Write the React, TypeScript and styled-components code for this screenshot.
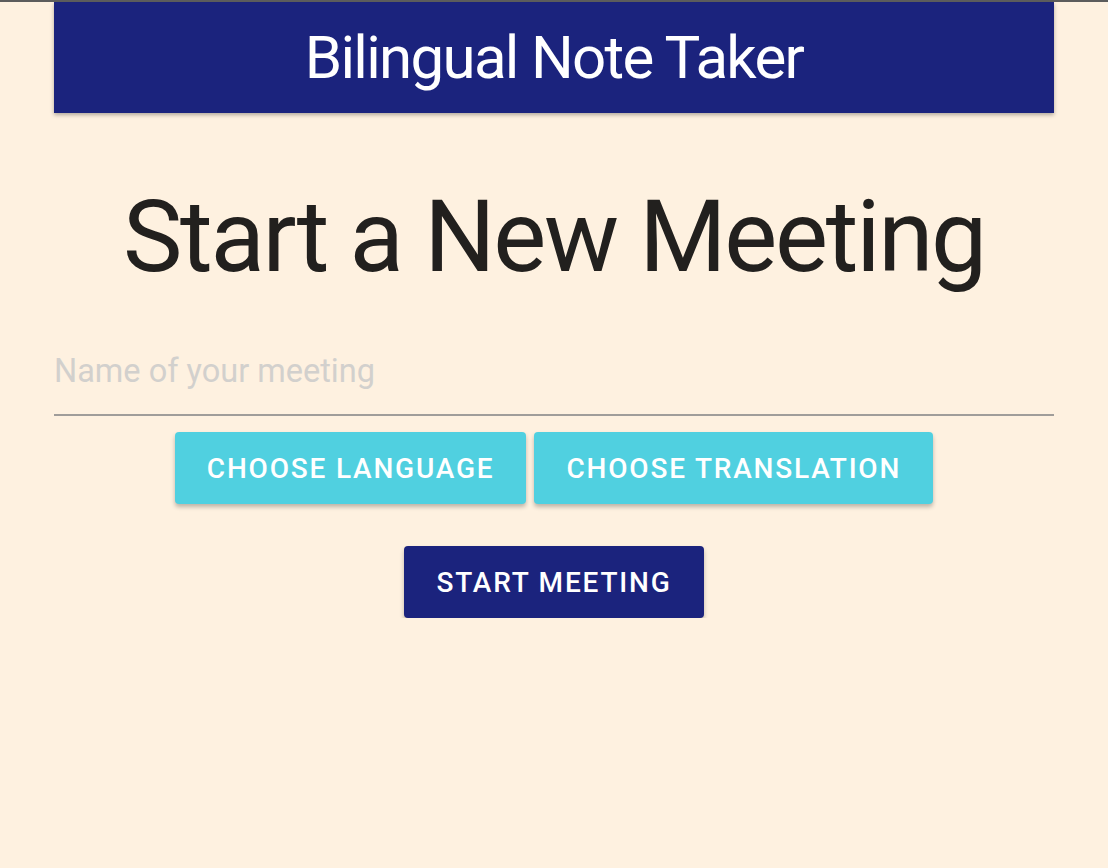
import React, { useState } from 'react';
import styled, { createGlobalStyle } from 'styled-components';

const GlobalStyle = createGlobalStyle`
  html, body {
    margin: 0;
    padding: 0;
    background: #fef1e0;
    font-family: Roboto, "Noto Sans", sans-serif;
  }
  body {
    border-top: 2px solid #5c5c5c;
  }
`

const Page = styled.div`
  width: 1000px;
  margin: 0 auto;
  display: flex;
  flex-direction: column;
  align-items: center;
`
const Header = styled.header`
  width: 100%;
  height: 111px;
  background: #1b237d;
  box-shadow: 0 2px 4px rgba(0, 0, 0, 0.3);
  display: flex;
  align-items: center;
  justify-content: center;
`
const HeaderTitle = styled.h1`
  margin: 0;
  color: #fff;
  font-size: 60px;
  font-weight: 400;
  letter-spacing: -1.7px;
`
const Title = styled.h2`
  margin: 64px 0 0;
  font-size: 100px;
  font-weight: 400;
  line-height: 1.2;
  color: #22201e;
  letter-spacing: -2.3px;
`
const NameInput = styled.input`
  width: 100%;
  box-sizing: border-box;
  margin-top: 55px;
  padding: 0 0 24px;
  border: none;
  border-bottom: 2px solid #a09d9a;
  background: transparent;
  font-family: inherit;
  font-size: 32.5px;
  color: #22201e;
  outline: none;
  &::placeholder {
    color: #d2d0cd;
  }
`
const ButtonRow = styled.div`
  display: flex;
  gap: 8px;
  margin-top: 16px;
`
const Button = styled.button<{ $variant: 'accent' | 'primary' }>`
  height: 72px;
  padding: 0 32px;
  border: none;
  border-radius: 4px;
  background: ${({ $variant }) => ($variant === 'accent' ? '#50d0e0' : '#1b237d')};
  color: #fff;
  font-family: inherit;
  font-size: 28px;
  font-weight: 500;
  letter-spacing: 1.8px;
  text-transform: uppercase;
  box-shadow: 0 3px 4px rgba(0, 0, 0, 0.25);
  cursor: pointer;
`
const StartRow = styled.div`
  margin-top: 42px;
`

export default function App() {
  const [name, setName] = useState('')

  return (
    <>
      <GlobalStyle />
      <Page>
        <Header>
          <HeaderTitle>Bilingual Note Taker</HeaderTitle>
        </Header>
        <Title>Start a New Meeting</Title>
        <NameInput
          placeholder="Name of your meeting"
          value={name}
          onChange={e => setName(e.target.value)}
        />
        <ButtonRow>
          <Button $variant="accent">Choose Language</Button>
          <Button $variant="accent">Choose Translation</Button>
        </ButtonRow>
        <StartRow>
          <Button $variant="primary">Start Meeting</Button>
        </StartRow>
      </Page>
    </>
  )
}
